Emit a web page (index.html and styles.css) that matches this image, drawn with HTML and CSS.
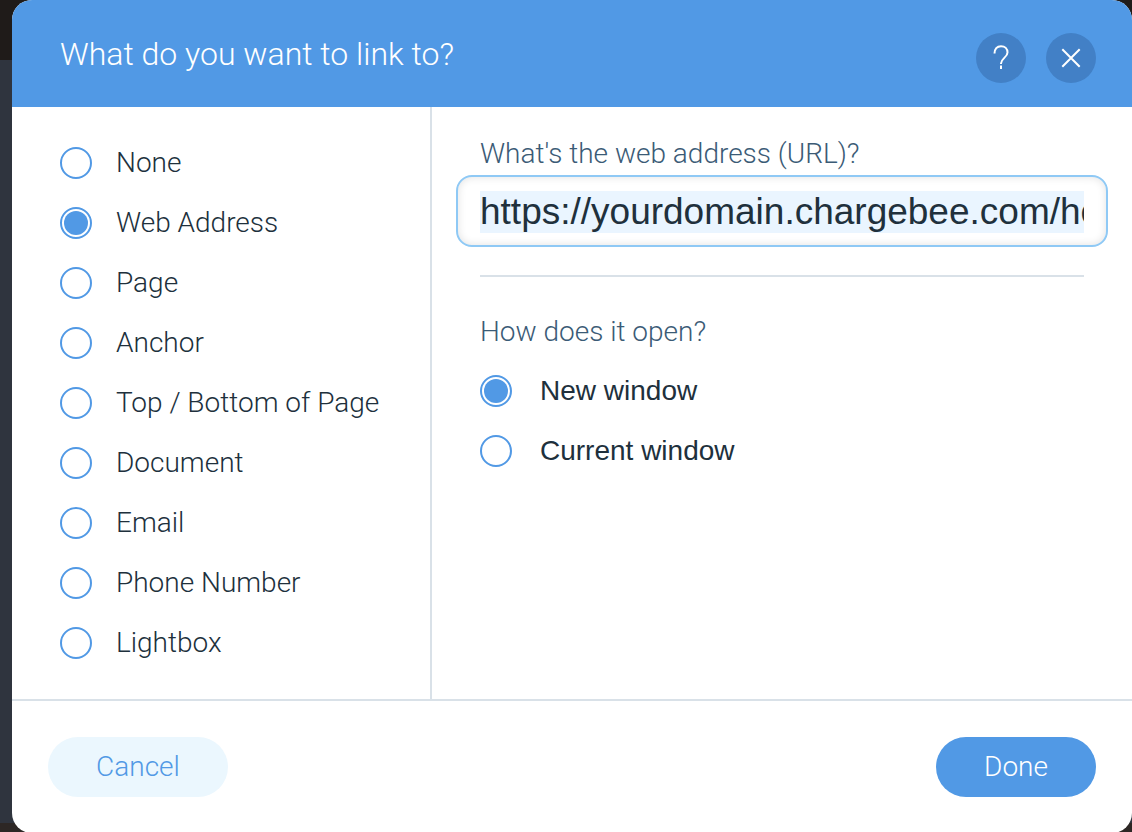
FILE: index.html
```html
<!DOCTYPE html>
<html lang="en">
<head>
<meta charset="utf-8">
<meta name="viewport" content="width=device-width, initial-scale=1">
<title>What do you want to link to?</title>
<link rel="stylesheet" href="styles.css">
</head>
<body>
<form class="dialog">
  <header class="header">
    <h1 class="title">What do you want to link to?</h1>
    <div class="header-actions">
      <button class="round-button" type="button" aria-label="Help">
        <svg class="icon" viewBox="0 0 50 50" aria-hidden="true"><path d="M18.500 20.500c0-4.500 2.500-7.300 6.500-7.300s6.500 2.600 6.500 6.300c0 5-6.500 5.800-6.500 11v.500M25 32.500v3.500"/></svg>
      </button>
      <button class="round-button" type="button" aria-label="Close">
        <svg class="icon" viewBox="0 0 50 50" aria-hidden="true"><path d="M16.300 16.300l17.400 17.400M33.700 16.300l-17.400 17.400"/></svg>
      </button>
    </div>
  </header>
  <div class="body">
    <div class="types" role="radiogroup" aria-label="Link type">
      <label class="option"><input class="radio" type="radio" name="type">None</label>
      <label class="option"><input class="radio" type="radio" name="type" checked>Web Address</label>
      <label class="option"><input class="radio" type="radio" name="type">Page</label>
      <label class="option"><input class="radio" type="radio" name="type">Anchor</label>
      <label class="option"><input class="radio" type="radio" name="type">Top / Bottom of Page</label>
      <label class="option"><input class="radio" type="radio" name="type">Document</label>
      <label class="option"><input class="radio" type="radio" name="type">Email</label>
      <label class="option"><input class="radio" type="radio" name="type">Phone Number</label>
      <label class="option"><input class="radio" type="radio" name="type">Lightbox</label>
    </div>
    <div class="settings">
      <label class="caption" for="url">What's the web address (URL)?</label>
      <input class="url" id="url" type="text" value="https://yourdomain.chargebee.com/hosted_pages" spellcheck="false">
      <hr class="rule">
      <div class="targets" role="radiogroup" aria-labelledby="open-caption">
        <span class="caption" id="open-caption">How does it open?</span>
        <label class="option option-strong"><input class="radio" type="radio" name="target" checked>New window</label>
        <label class="option option-strong"><input class="radio" type="radio" name="target">Current window</label>
      </div>
    </div>
  </div>
  <footer class="footer">
    <button class="button button-cancel" type="button">Cancel</button>
    <button class="button button-done" type="button">Done</button>
  </footer>
</form>
</body>
</html>
```
FILE: styles.css
```css
* {
  box-sizing: border-box;
}

body {
  margin: 0;
  padding-left: 12px;
  min-height: 100vh;
  display: flex;
  background: linear-gradient(#1f1b19 60px, #2f343e 60px, #2f343e calc(100% - 10px), #2d2725 calc(100% - 10px));
  color: #20303c;
  font-family: Roboto, "Liberation Sans", sans-serif;
  font-size: 28px;
  font-weight: 300;
  line-height: 32px;
}

.dialog {
  flex: 1;
  min-width: 0;
  display: flex;
  flex-direction: column;
  border-radius: 20px;
  overflow: hidden;
  background: #fff;
}

.header {
  display: flex;
  justify-content: space-between;
  align-items: flex-start;
  padding: 33px 36px 24px 48px;
  background: #5199e5;
  color: #fff;
}

.title {
  margin: 0;
  font-size: 32px;
  font-weight: 300;
  line-height: 42px;
}

.header-actions {
  display: flex;
  gap: 20px;
}

.round-button {
  width: 50px;
  height: 50px;
  padding: 0;
  border: 0;
  border-radius: 50%;
  background: #4280c6;
  color: #fff;
}

.icon {
  display: block;
  width: 100%;
  height: 100%;
  fill: none;
  stroke: currentColor;
  stroke-width: 2;
}

.body {
  flex: 1;
  display: flex;
  border-bottom: 2px solid #d9e1e8;
}

.types {
  flex: 0 0 420px;
  display: flex;
  flex-direction: column;
  gap: 26px;
  padding: 39px 24px 39px 48px;
  border-right: 2px solid #d9e1e8;
}

.option {
  display: flex;
  align-items: center;
  gap: 24px;
  line-height: 34px;
}

.option-strong {
  gap: 28px;
  font-family: "Liberation Sans", sans-serif;
  font-weight: 400;
}

.radio {
  appearance: none;
  flex: none;
  width: 32px;
  height: 32px;
  margin: 0;
  padding: 2px;
  border: 2px solid #5199e5;
  border-radius: 50%;
}

.radio:checked {
  background: #5199e5 content-box;
}

.settings {
  flex: 1;
  min-width: 0;
  display: flex;
  flex-direction: column;
  padding: 31px 24px;
}

.caption {
  padding-left: 24px;
  color: #3b5b76;
}

.url {
  width: 100%;
  height: 72px;
  margin-top: 5px;
  padding: 14px 22px 12px;
  border: 2px solid #8fc9f5;
  border-radius: 16px;
  outline: 0;
  background: linear-gradient(#eaf5ff, #eaf5ff) content-box, #fff;
  box-shadow: inset 0 0 8px rgba(0, 0, 0, 0.12);
  color: #20303c;
  font-family: "Liberation Sans", sans-serif;
  font-size: 37px;
}

.rule {
  align-self: stretch;
  margin: 28px 24px 0;
  border: 0;
  border-top: 2px solid #d9e1e8;
}

.targets {
  display: flex;
  flex-direction: column;
  gap: 26px;
  margin-top: 39px;
}

.targets .caption,
.targets .option {
  padding-left: 24px;
}

.footer {
  display: flex;
  justify-content: space-between;
  padding: 36px;
}

.button {
  height: 60px;
  padding: 0 48px;
  border: 0;
  border-radius: 30px;
  font: inherit;
}

.button-cancel {
  min-width: 180px;
  background: #ebf7fe;
  color: #5199e5;
}

.button-done {
  min-width: 160px;
  background: #5199e5;
  color: #fff;
}
```
